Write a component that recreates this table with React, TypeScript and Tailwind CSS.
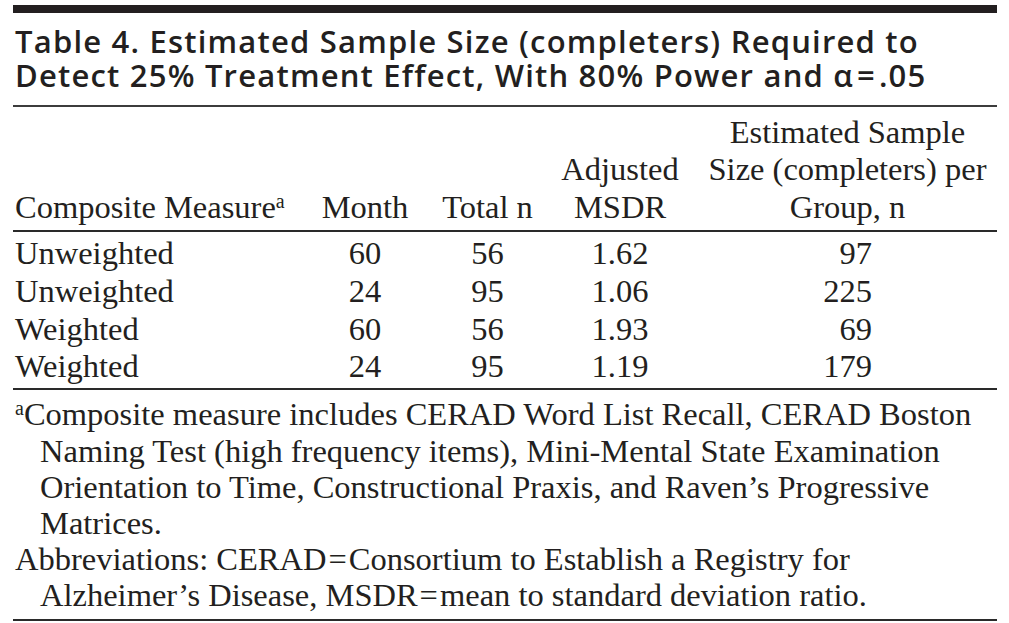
const serif = "font-['Liberation_Serif','Times_New_Roman',serif]";

const rows = [
  { measure: "Unweighted", month: "60", total: "56", msdr: "1.62", n: "97" },
  { measure: "Unweighted", month: "24", total: "95", msdr: "1.06", n: "225" },
  { measure: "Weighted", month: "60", total: "56", msdr: "1.93", n: "69" },
  { measure: "Weighted", month: "24", total: "95", msdr: "1.19", n: "179" },
];

const cols = "grid grid-cols-[292px_120px_125px_140px_1fr]";

const Sup = () => <span className="relative -top-[10px] text-[20px] leading-none">a</span>;
const Eq = () => <span className="mx-[2px]">=</span>;

export default function App() {
  return (
    <div className={`w-[1009px] h-[623px] overflow-hidden bg-white pt-[5px] pl-[13px] pr-[12px] text-[#231f20] ${serif}`}>
      <div className="h-[8px] bg-[#231f20]" />

      <h1 className="mt-[11px] pl-[2px] font-['Open_Sans',sans-serif] font-semibold text-[31px] tracking-[1.2px] leading-[34px] whitespace-nowrap">
        Table 4. Estimated Sample Size (completers) Required to
        <br />
        Detect 25% Treatment Effect, With 80% Power and α<span className="mx-[3px]">=</span>.05
      </h1>

      <div className="mt-[13px] h-[1.5px] bg-[#3c3c3c]" />

      {/* column heads */}
      <div className={`${cols} items-end pt-[7px] pb-[3px] text-[32.5px] leading-[37.7px]`}>
        <div className="pl-[2px] whitespace-nowrap">
          Composite Measure<Sup />
        </div>
        <div className="text-center">Month</div>
        <div className="text-center">Total n</div>
        <div className="text-center">
          Adjusted
          <br />
          MSDR
        </div>
        <div className="pl-[8px] text-center whitespace-nowrap">
          Estimated Sample
          <br />
          Size (completers) per
          <br />
          Group, n
        </div>
      </div>

      <div className="h-[2.5px] bg-[#2a2a2a]" />

      <div className="pt-[3px] pb-[2px] text-[32.5px] leading-[37.7px]">
        {rows.map((r, i) => (
          <div key={i} className={cols}>
            <div className="pl-[2px]">{r.measure}</div>
            <div className="text-center">{r.month}</div>
            <div className="text-center">{r.total}</div>
            <div className="text-center">{r.msdr}</div>
            <div className="text-right pr-[125px]">{r.n}</div>
          </div>
        ))}
      </div>

      <div className="h-[2.5px] bg-[#2a2a2a]" />

      <div className="pt-[6px] pb-[5px] text-[32.5px] leading-[36.2px] whitespace-nowrap">
        <p className="pl-[27px] indent-[-25px]">
          <Sup />Composite measure includes CERAD Word List Recall, CERAD Boston
          <br />
          Naming Test (high frequency items), Mini-Mental State Examination
          <br />
          Orientation to Time, Constructional Praxis, and Raven’s Progressive
          <br />
          Matrices.
        </p>
        <p className="pl-[27px] indent-[-25px]">
          Abbreviations: CERAD<Eq />Consortium to Establish a Registry for
          <br />
          Alzheimer’s Disease, MSDR<Eq />mean to standard deviation ratio.
        </p>
      </div>

      <div className="h-[2px] bg-[#2a2a2a]" />
    </div>
  );
}
